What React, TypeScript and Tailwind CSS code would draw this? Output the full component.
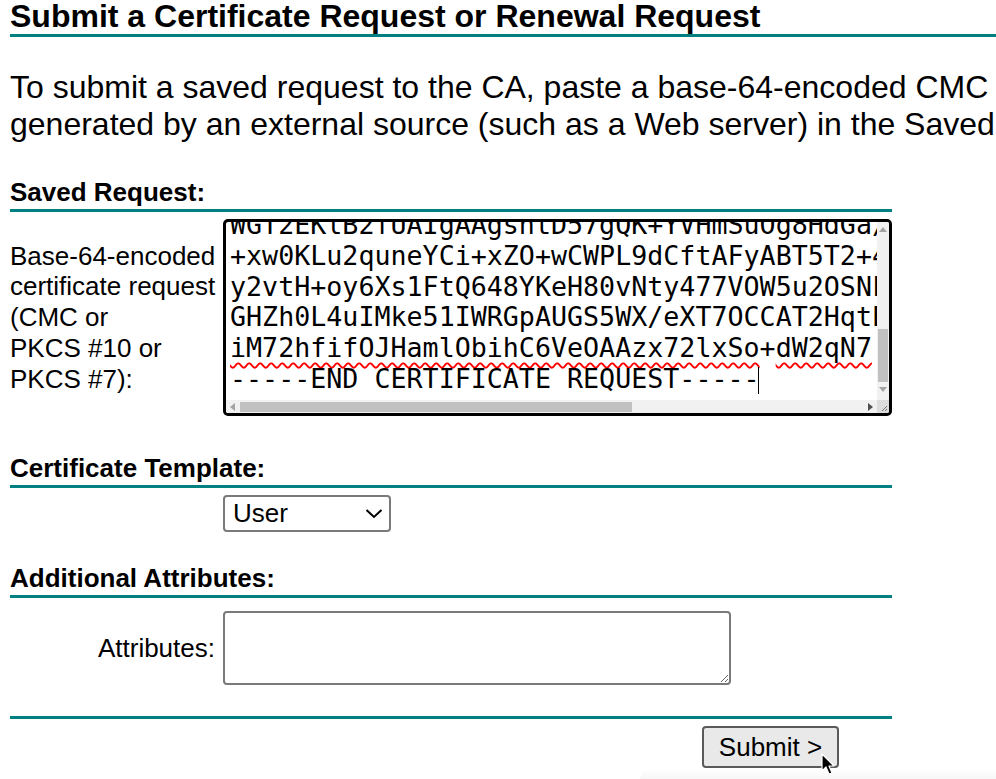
import React from "react";

const lines: { text: string; wavy?: boolean }[] = [
  { text: "WGT2EKlB2fUAIgAAgshtD57gQK+YVHmSuOg8HdGa/AbCd" },
  { text: "+xw0KLu2quneYCi+xZO+wCWPL9dCftAFyABT5T2+4kQz" },
  { text: "y2vtH+oy6Xs1FtQ648YKeH80vNty477VOW5u2OSNkPq" },
  { text: "GHZh0L4uIMke51IWRGpAUGS5WX/eXT7OCCAT2HqtEwR" },
  { text: "", wavy: true },
  { text: "-----END CERTIFICATE REQUEST-----" },
];

function Wavy({ children }: { children: React.ReactNode }) {
  return (
    <span className="underline decoration-wavy decoration-[#ff0000] decoration-2 underline-offset-[5px]">
      {children}
    </span>
  );
}

function SectionHeader({ title, className }: { title: string; className?: string }) {
  return (
    <div
      className={
        "text-[26px] leading-[30px] font-bold pb-[2px] border-b-[3px] border-[#008080] " +
        (className ?? "")
      }
    >
      {title}
    </div>
  );
}

// fake textarea, focused and scrolled, so the scrollbars can be drawn
function RequestBox() {
  return (
    <div className="w-[669px] h-[197px] border-[3px] border-black rounded-[5px] flex flex-col overflow-hidden bg-white">
      <div className="flex flex-1 min-h-0">
        <div className="relative flex-1 overflow-hidden">
          <div className="mt-[-12px] pl-[4px] font-['DejaVu_Sans_Mono',monospace] text-[26.67px] leading-[30.8px] text-black whitespace-pre">
            {lines.map((l, i) =>
              l.wavy ? (
                <div key={i}>
                  <Wavy>iM72hfifOJHamlObihC6VeOAAzx72lxSo</Wavy>+<Wavy>dW2qN7</Wavy>
                </div>
              ) : (
                <div key={i}>
                  {l.text}
                  {i === lines.length - 1 && (
                    <span className="inline-block w-[1.5px] h-[27px] bg-black align-[-6px] ml-[-2px]" />
                  )}
                </div>
              )
            )}
          </div>
        </div>
        {/* vertical scrollbar */}
        <div className="w-[12px] bg-[#f1f1f1] flex flex-col items-center">
          <svg width="8" height="5" viewBox="0 0 8 5" className="mt-[5px]">
            <path d="M0 5 L4 0 L8 5 Z" fill="#a3a3a3" />
          </svg>
          <div className="flex-1" />
          <div className="w-[10px] h-[53px] bg-[#c1c1c1]" />
          <svg width="8" height="5" viewBox="0 0 8 5" className="mt-[5px] mb-[8px]">
            <path d="M0 0 L8 0 L4 5 Z" fill="#a3a3a3" />
          </svg>
        </div>
      </div>
      {/* horizontal scrollbar */}
      <div className="flex h-[13px]">
        <div className="flex-1 bg-[#f1f1f1] flex items-center">
          <svg width="5" height="8" viewBox="0 0 5 8" className="ml-[4px]">
            <path d="M5 0 L0 4 L5 8 Z" fill="#a3a3a3" />
          </svg>
          <div className="ml-[5px] w-[392px] h-[10px] bg-[#c1c1c1]" />
          <div className="flex-1" />
          <svg width="5" height="8" viewBox="0 0 5 8" className="mr-[4px]">
            <path d="M0 0 L5 4 L0 8 Z" fill="#505050" />
          </svg>
        </div>
        <div className="w-[12px] bg-[#dcdcdc] relative">
          <svg width="12" height="13" viewBox="0 0 12 13" className="absolute inset-0">
            <path d="M10 6 L5 11 M10 9 L8 11" stroke="#777" strokeWidth="1" />
          </svg>
        </div>
      </div>
    </div>
  );
}

export default function App() {
  return (
    <div className="relative w-[996px] h-[779px] overflow-hidden bg-white text-black font-['Liberation_Sans',Arial,sans-serif]">
      <div className="w-[1500px] px-[10px]">
        <h1 className="text-[32px] leading-8 font-bold pb-[2px] border-b-[3px] border-[#008080]">
          Submit a Certificate Request or Renewal Request
        </h1>
        <p className="mt-[32px] text-[32px] leading-[37px] whitespace-nowrap">
          To submit a saved request to the CA, paste a base-64-encoded CMC or PKCS #10 certificate
          request or PKCS #7 renewal request
          <br />
          generated by an external source (such as a Web server) in the Saved Request box.
        </p>

        <div className="w-[882px]">
          <SectionHeader title="Saved Request:" className="mt-[34px]" />
          <div className="mt-[7px] flex">
            <div className="w-[213px] flex items-center text-[26px] leading-[30.7px]">
              <div>
                Base-64-encoded
                <br />
                certificate request
                <br />
                (CMC or
                <br />
                PKCS #10 or
                <br />
                PKCS #7):
              </div>
            </div>
            <RequestBox />
          </div>

          <SectionHeader title="Certificate Template:" className="mt-[37px]" />
          <div className="mt-[7px] ml-[213px] w-[168px] h-[37px] border-2 border-[#7a7a7a] rounded-[4px] flex items-center justify-between pl-[8px] pr-[6px] text-[26px]">
            <span>User</span>
            <svg width="18" height="11" viewBox="0 0 18 11">
              <path d="M1.5 2 L9 9 L16.5 2" fill="none" stroke="black" strokeWidth="2" />
            </svg>
          </div>

          <SectionHeader title="Additional Attributes:" className="mt-[31px]" />
          <div className="mt-[13px] flex items-center">
            <div className="w-[213px] pr-[8px] text-right text-[26px] leading-[30.7px]">Attributes:</div>
            <textarea
              className="w-[508px] h-[74px] border-2 border-[#7a7a7a] rounded-[4px] bg-white"
              defaultValue=""
            />
          </div>

          <div className="mt-[31px] border-t-[3px] border-[#008080]" />
          <button className="mt-[7px] ml-[692px] w-[137px] h-[42px] border-2 border-[#5a5a5a] rounded-[4px] bg-[#e9e9e9] text-[26px] leading-none">
            Submit &gt;
          </button>
        </div>
      </div>

      {/* faint shadow of something below the fold */}
      <div className="absolute bottom-0 right-0 w-[356px] h-[10px] rounded-tl-[10px] bg-gradient-to-b from-white to-[#f6f6f6]" />

      {/* mouse pointer */}
      <svg
        className="absolute left-[821px] top-[753px]"
        width="16"
        height="24"
        viewBox="0 0 16 24"
      >
        <path
          d="M1 1 L1 18 L5 14 L8 21 L11 20 L8 13 L13 13 Z"
          fill="black"
          stroke="white"
          strokeWidth="1.2"
          strokeLinejoin="round"
        />
      </svg>
    </div>
  );
}
